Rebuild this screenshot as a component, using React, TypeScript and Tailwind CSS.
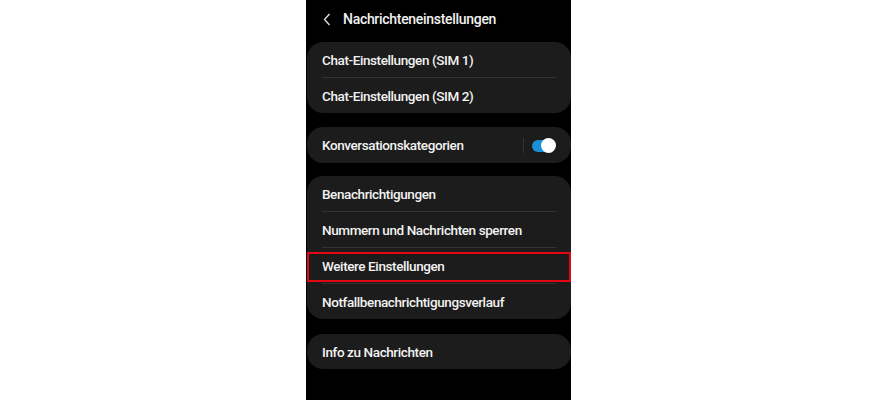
import React from 'react';

function Row({ label, last }: { label: string; last?: boolean }) {
  return (
    <div className="px-[15px]">
      <div className="h-[35px] pt-[2px] flex items-center text-[13.5px] tracking-[-0.4px] text-[#f2f2f2] font-medium whitespace-nowrap">
        {label}
      </div>
      {!last && <div className="h-px bg-[#333333]" />}
    </div>
  );
}

function Card({ children }: { children: React.ReactNode }) {
  return <div className="relative ml-px bg-[#1c1c1c] rounded-[16px]">{children}</div>;
}

export default function App() {
  return (
    <div className="w-[879px] h-[400px] bg-white" style={{ fontFamily: 'Roboto, "Noto Sans", sans-serif' }}>
      <div className="ml-[306px] w-[265px] h-[400px] bg-black flex flex-col">
        <div className="h-[42px] flex items-center pl-[17px] pb-[4px]">
          <svg width="8" height="13" viewBox="0 0 8 13" className="mr-[12px]">
            <path d="M6.5 1 L1.5 6.5 L6.5 12" stroke="#e6e6e6" strokeWidth="1.3" fill="none" />
          </svg>
          <span className="text-[14px] tracking-[-0.3px] text-[#f2f2f2] font-medium">Nachrichteneinstellungen</span>
        </div>
        <Card>
          <Row label="Chat-Einstellungen (SIM 1)" />
          <Row label="Chat-Einstellungen (SIM 2)" last />
        </Card>
        <div className="h-[14px]" />
        <Card>
          <div className="h-[36px] pt-[1px] pl-[15px] pr-[16px] flex items-center">
            <span className="flex-1 text-[13.5px] tracking-[-0.4px] text-[#f2f2f2] font-medium">Konversationskategorien</span>
            <div className="w-px h-[15px] bg-[#333333] mr-[8px]" />
            <div className="relative w-[23px] h-[12px] rounded-full bg-[#1a8fd6]">
              <div className="absolute right-[-1px] top-[-1.5px] w-[15px] h-[15px] rounded-full bg-white" />
            </div>
          </div>
        </Card>
        <div className="h-[13px]" />
        <Card>
          <Row label="Benachrichtigungen" />
          <Row label="Nummern und Nachrichten sperren" />
          <Row label="Weitere Einstellungen" />
          <Row label="Notfallbenachrichtigungsverlauf" last />
          <div className="absolute left-0 right-0 top-[76px] h-[30px] border-2 border-[#e30613]" />
        </Card>
        <div className="h-[15px]" />
        <Card>
          <Row label="Info zu Nachrichten" last />
        </Card>
      </div>
    </div>
  );
}
